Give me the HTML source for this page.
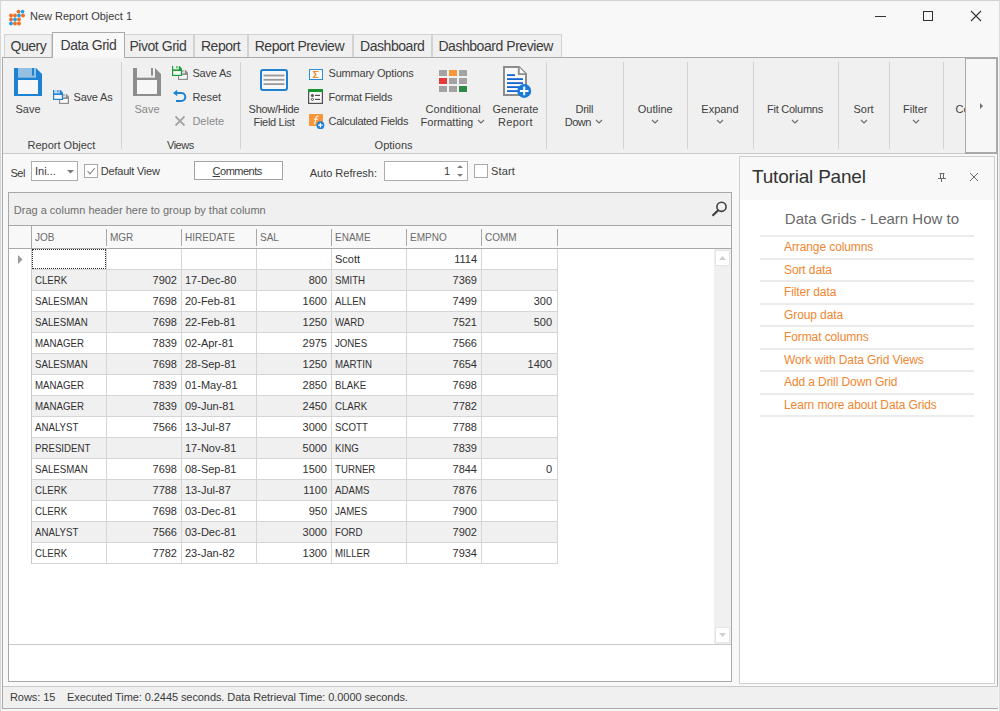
<!DOCTYPE html>
<html><head><meta charset="utf-8">
<style>
*{box-sizing:border-box;margin:0;padding:0}
html,body{width:1000px;height:711px;overflow:hidden;background:#f8f8f8;font-family:"Liberation Sans",sans-serif;color:#3b3b3b}
body{position:relative}
.a{position:absolute}
.t{position:absolute;white-space:nowrap;line-height:1}
svg{position:absolute;overflow:visible}
</style></head><body>
<div class="a" style="left:0px;top:0px;width:1000px;height:1px;background:#d2d2d2;"></div>
<div class="a" style="left:0px;top:0px;width:1px;height:711px;background:#d6d6d6;"></div>
<div class="a" style="left:999px;top:0px;width:1px;height:711px;background:#dcdcdc;"></div>
<svg style="left:8px;top:8.5px" width="18" height="18" viewBox="0 0 18 18">
<g fill="#f56d1f"><circle cx="10.5" cy="2.6" r="1.9"/><circle cx="3" cy="6.5" r="1.9"/><circle cx="7" cy="6.5" r="1.9"/><circle cx="15" cy="6.5" r="1.9"/><circle cx="3" cy="10.5" r="1.9"/><circle cx="11" cy="10.5" r="1.9"/><circle cx="7" cy="14.5" r="1.9"/><circle cx="11" cy="14.5" r="1.9"/></g>
<g fill="#1aa3f0"><circle cx="14.5" cy="2.6" r="1.9"/><circle cx="11" cy="6.5" r="1.9"/><circle cx="7" cy="10.5" r="1.9"/><circle cx="3" cy="14.5" r="1.9"/></g>
</svg>
<div class="t" style="left:30px;top:11px;font-size:11px;color:#3b3b3b;">New Report Object 1</div>
<div class="a" style="left:875px;top:16px;width:11px;height:1px;background:#333;"></div>
<div class="a" style="left:923px;top:11px;width:10px;height:10px;border:1px solid #333"></div>
<svg style="left:971px;top:11px" width="10" height="10" viewBox="0 0 10 10"><path d="M0 0L10 10M10 0L0 10" stroke="#333" stroke-width="1.1"/></svg>
<div class="a" style="left:4px;top:34px;width:48px;height:24px;background:#f0f0f0;border:1px solid #d2d2d2;border-bottom:none"></div>
<div class="t" style="left:10.5px;top:39px;font-size:14px;color:#3b3b3b;letter-spacing:-0.45px;">Query</div>
<div class="a" style="left:124px;top:34px;width:70px;height:24px;background:#f0f0f0;border:1px solid #d2d2d2;border-bottom:none"></div>
<div class="t" style="left:129.4px;top:39px;font-size:14px;color:#3b3b3b;letter-spacing:-0.45px;">Pivot Grid</div>
<div class="a" style="left:194px;top:34px;width:54px;height:24px;background:#f0f0f0;border:1px solid #d2d2d2;border-bottom:none"></div>
<div class="t" style="left:200.9px;top:39px;font-size:14px;color:#3b3b3b;letter-spacing:-0.45px;">Report</div>
<div class="a" style="left:248px;top:34px;width:105px;height:24px;background:#f0f0f0;border:1px solid #d2d2d2;border-bottom:none"></div>
<div class="t" style="left:254.7px;top:39px;font-size:14px;color:#3b3b3b;letter-spacing:-0.45px;">Report Preview</div>
<div class="a" style="left:353px;top:34px;width:79px;height:24px;background:#f0f0f0;border:1px solid #d2d2d2;border-bottom:none"></div>
<div class="t" style="left:360px;top:39px;font-size:14px;color:#3b3b3b;letter-spacing:-0.45px;">Dashboard</div>
<div class="a" style="left:432px;top:34px;width:130px;height:24px;background:#f0f0f0;border:1px solid #d2d2d2;border-bottom:none"></div>
<div class="t" style="left:438.4px;top:39px;font-size:14px;color:#3b3b3b;letter-spacing:-0.45px;">Dashboard Preview</div>
<div class="a" style="left:2px;top:57px;width:996px;height:97px;background:#f0f0f0;border:1px solid #ababab;border-bottom-color:#c9c9c9"></div>
<div class="a" style="left:52px;top:32px;width:73px;height:26px;background:#f8f8f8;border:1px solid #ababab;border-bottom:none"></div>
<div class="t" style="left:60.5px;top:38px;font-size:14px;color:#3b3b3b;letter-spacing:-0.45px;">Data Grid</div>
<div class="a" style="left:121px;top:62px;width:1px;height:87px;background:#d3d3d3;"></div>
<div class="a" style="left:240px;top:62px;width:1px;height:87px;background:#d3d3d3;"></div>
<div class="a" style="left:546px;top:62px;width:1px;height:87px;background:#d3d3d3;"></div>
<div class="a" style="left:623px;top:62px;width:1px;height:87px;background:#d3d3d3;"></div>
<div class="a" style="left:687px;top:62px;width:1px;height:87px;background:#d3d3d3;"></div>
<div class="a" style="left:753px;top:62px;width:1px;height:87px;background:#d3d3d3;"></div>
<div class="a" style="left:838px;top:62px;width:1px;height:87px;background:#d3d3d3;"></div>
<div class="a" style="left:889px;top:62px;width:1px;height:87px;background:#d3d3d3;"></div>
<div class="a" style="left:943px;top:62px;width:1px;height:87px;background:#d3d3d3;"></div>
<svg style="left:14px;top:68px" width="28" height="28" viewBox="0 0 28 28">
<path d="M0 0H22L28 6V28H0Z" fill="#1d82d3"/><rect x="4" y="0" width="18" height="9.7" fill="#93bfe2"/><rect x="18" y="0" width="2" height="7.6" fill="#1d82d3"/><rect x="4" y="12" width="20" height="14" fill="#f7f7f7"/></svg>
<div class="t" style="left:15.5px;top:104px;font-size:11px;color:#3f3f3f;">Save</div>
<svg style="left:59px;top:94px" width="10" height="10" viewBox="0 0 10 10">
<path d="M0 0H7.5L10 2.5V10H0Z" fill="#8e8e8e"/><rect x="1.2" y="0" width="5.6" height="3.4" fill="#f0f0f0"/><rect x="4.4" y="0" width="1.1" height="2.4" fill="#8e8e8e"/><rect x="1.2" y="5" width="7.6" height="3.8" fill="#fafafa"/></svg>
<svg style="left:53px;top:90px" width="10" height="10" viewBox="0 0 10 10">
<path d="M0 0H7.5L10 2.5V10H0Z" fill="#1d82d3"/><rect x="1.2" y="0" width="5.6" height="3.4" fill="#c5dcf0"/><rect x="4.4" y="0" width="1.1" height="2.4" fill="#1d82d3"/><rect x="1.2" y="5" width="7.6" height="3.8" fill="#fafafa"/></svg>
<div class="t" style="left:73.5px;top:92px;font-size:11px;color:#3f3f3f;letter-spacing:-0.2px;">Save As</div>
<div class="t" style="left:27.5px;top:140px;font-size:11px;color:#3f3f3f;">Report Object</div>
<svg style="left:133px;top:68px" width="28" height="28" viewBox="0 0 28 28">
<path d="M0 0H22L28 6V28H0Z" fill="#8e8e8e"/><rect x="4" y="0" width="18" height="9.7" fill="#f0f0f0"/><rect x="18" y="0" width="2" height="7.6" fill="#8e8e8e"/><rect x="4" y="12" width="20" height="14" fill="#f7f7f7"/></svg>
<div class="t" style="left:134.5px;top:104px;font-size:11px;color:#8a8a8a;">Save</div>
<svg style="left:178px;top:70px" width="10" height="10" viewBox="0 0 10 10">
<path d="M0 0H7.5L10 2.5V10H0Z" fill="#8e8e8e"/><rect x="1.2" y="0" width="5.6" height="3.4" fill="#f0f0f0"/><rect x="4.4" y="0" width="1.1" height="2.4" fill="#8e8e8e"/><rect x="1.2" y="5" width="7.6" height="3.8" fill="#fafafa"/></svg>
<svg style="left:172px;top:66px" width="10" height="10" viewBox="0 0 10 10">
<path d="M0 0H7.5L10 2.5V10H0Z" fill="#1e9e3a"/><rect x="1.2" y="0" width="5.6" height="3.4" fill="#f2f2f2"/><rect x="4.4" y="0" width="1.1" height="2.4" fill="#1e9e3a"/><rect x="1.2" y="5" width="7.6" height="3.8" fill="#fafafa"/></svg>
<div class="t" style="left:192.4px;top:68px;font-size:11px;color:#3f3f3f;letter-spacing:-0.2px;">Save As</div>
<svg style="left:172px;top:90px" width="15" height="13" viewBox="0 0 15 13"><path d="M4.5 3H9.3A4 4 0 0 1 9.3 11H4" fill="none" stroke="#1d82d3" stroke-width="2"/><path d="M1 3L5.2 -0.2V6.2Z" fill="#1d82d3"/></svg>
<div class="t" style="left:192.4px;top:92px;font-size:11px;color:#3f3f3f;">Reset</div>
<svg style="left:175px;top:116px" width="10" height="10" viewBox="0 0 10 10"><path d="M0.5 0.5L9.5 9.5M9.5 0.5L0.5 9.5" stroke="#a6a6a6" stroke-width="1.8"/></svg>
<div class="t" style="left:192.4px;top:116px;font-size:11px;color:#8a8a8a;">Delete</div>
<div class="t" style="left:167px;top:140px;font-size:11px;color:#3f3f3f;letter-spacing:-0.5px;">Views</div>
<svg style="left:260px;top:69px" width="28" height="22" viewBox="0 0 28 22">
<rect x="1" y="1" width="26" height="20" rx="2" fill="#f7f7f7" stroke="#1d82d3" stroke-width="2"/>
<rect x="3.5" y="5.6" width="21" height="1.8" fill="#9a9a9a"/><rect x="3.5" y="9.9" width="21" height="1.8" fill="#9a9a9a"/><rect x="3.5" y="14.2" width="21" height="1.8" fill="#9a9a9a"/></svg>
<div class="t" style="left:248.6px;top:104px;font-size:11px;color:#3f3f3f;letter-spacing:-0.3px;">Show/Hide</div>
<div class="t" style="left:253.5px;top:117px;font-size:11px;color:#3f3f3f;letter-spacing:-0.3px;">Field List</div>
<svg style="left:309px;top:69px" width="14" height="11" viewBox="0 0 14 11">
<rect x="0.5" y="0.5" width="13" height="10" fill="#fafafa" stroke="#2b8bd8" stroke-width="1"/>
<path d="M9.5 2.5H4.5L7 5.5L4.5 8.5H9.5" fill="none" stroke="#f08a24" stroke-width="1.2"/></svg>
<div class="t" style="left:328.5px;top:68px;font-size:11px;color:#3f3f3f;letter-spacing:-0.2px;">Summary Options</div>
<svg style="left:308px;top:89px" width="15" height="15" viewBox="0 0 15 15">
<rect x="0.6" y="0.6" width="13.8" height="13.8" fill="#f7f7f7" stroke="#505050" stroke-width="1.2"/>
<rect x="0" y="0" width="15" height="3" fill="#14952e"/>
<circle cx="4.4" cy="6.4" r="1.5" fill="#505050"/><circle cx="4.4" cy="10.4" r="1.1" fill="none" stroke="#505050" stroke-width="1"/>
<rect x="7" y="5.8" width="5" height="1.2" fill="#505050"/><rect x="7" y="9.8" width="5" height="1.2" fill="#505050"/></svg>
<div class="t" style="left:328.5px;top:92px;font-size:11px;color:#3f3f3f;letter-spacing:-0.28px;">Format Fields</div>
<svg style="left:309px;top:114px" width="16" height="16" viewBox="0 0 16 16">
<rect x="0" y="0" width="14" height="12" fill="#f7963b"/>
<path d="M9.5 2.2C8 1.8 7.3 2.6 7 4L5.6 10.5M5 5.2H8.8" fill="none" stroke="#fff" stroke-width="1.1"/>
<circle cx="11.4" cy="11.2" r="3.9" fill="#1d7fd6"/>
<path d="M11.4 8.9V13.5M9.1 11.2H13.7" stroke="#fff" stroke-width="1.2"/></svg>
<div class="t" style="left:328.5px;top:116px;font-size:11px;color:#3f3f3f;letter-spacing:-0.28px;">Calculated Fields</div>
<div class="t" style="left:374.6px;top:140px;font-size:11px;color:#3f3f3f;">Options</div>
<div class="a" style="left:439px;top:70px;width:8px;height:6px;background:#a3a3a3;"></div>
<div class="a" style="left:449px;top:70px;width:8px;height:6px;background:#f9963a;"></div>
<div class="a" style="left:459px;top:70px;width:8px;height:6px;background:#a3a3a3;"></div>
<div class="a" style="left:439px;top:78px;width:8px;height:6px;background:#e63a3a;"></div>
<div class="a" style="left:449px;top:78px;width:8px;height:6px;background:#a3a3a3;"></div>
<div class="a" style="left:459px;top:78px;width:8px;height:6px;background:#a3a3a3;"></div>
<div class="a" style="left:439px;top:86px;width:8px;height:6px;background:#a3a3a3;"></div>
<div class="a" style="left:449px;top:86px;width:8px;height:6px;background:#a3a3a3;"></div>
<div class="a" style="left:459px;top:86px;width:8px;height:6px;background:#2e8b47;"></div>
<div class="t" style="left:425.6px;top:104px;font-size:11px;color:#3f3f3f;">Conditional</div>
<div class="t" style="left:420.6px;top:117px;font-size:11px;color:#3f3f3f;">Formatting</div>
<svg class="a" style="left:476.5px;top:119px" width="8" height="5" viewBox="0 0 8 5"><path d="M1 1L4 4L7 1" fill="none" stroke="#6f6f6f" stroke-width="1.2"/></svg>
<svg style="left:503px;top:66px" width="30" height="33" viewBox="0 0 30 33">
<path d="M1 1H16L23 8V29H1Z" fill="#f8f8f8" stroke="#8c8c8c" stroke-width="2"/>
<path d="M15.8 1V8.2H23" fill="#f8f8f8" stroke="#8c8c8c" stroke-width="1.8"/>
<rect x="4" y="8.2" width="8" height="1.8" fill="#1565d0"/>
<rect x="4" y="12.2" width="16" height="1.8" fill="#1565d0"/><rect x="4" y="16.2" width="16" height="1.8" fill="#1565d0"/><rect x="4" y="20.2" width="16" height="1.8" fill="#1565d0"/><rect x="4" y="24.2" width="16" height="1.8" fill="#1565d0"/>
<circle cx="21.2" cy="24.9" r="7" fill="#1a7ad8"/>
<path d="M21.2 20.6V29.2M16.9 24.9H25.5" stroke="#fff" stroke-width="2"/></svg>
<div class="t" style="left:492.5px;top:104px;font-size:11px;color:#3f3f3f;">Generate</div>
<div class="t" style="left:498px;top:117px;font-size:11px;color:#3f3f3f;letter-spacing:0.3px;">Report</div>
<div class="t" style="left:575.6px;top:104px;font-size:11px;color:#3f3f3f;letter-spacing:-0.3px;">Drill</div>
<div class="t" style="left:564.8px;top:117px;font-size:11px;color:#3f3f3f;letter-spacing:-0.5px;">Down</div>
<svg class="a" style="left:595px;top:119px" width="8" height="5" viewBox="0 0 8 5"><path d="M1 1L4 4L7 1" fill="none" stroke="#6f6f6f" stroke-width="1.2"/></svg>
<div class="t" style="left:637.8px;top:104px;font-size:11px;color:#3f3f3f;">Outline</div>
<svg class="a" style="left:651px;top:119px" width="8" height="5" viewBox="0 0 8 5"><path d="M1 1L4 4L7 1" fill="none" stroke="#6f6f6f" stroke-width="1.2"/></svg>
<div class="t" style="left:701.3px;top:104px;font-size:11px;color:#3f3f3f;">Expand</div>
<svg class="a" style="left:715.5px;top:119px" width="8" height="5" viewBox="0 0 8 5"><path d="M1 1L4 4L7 1" fill="none" stroke="#6f6f6f" stroke-width="1.2"/></svg>
<div class="t" style="left:767px;top:104px;font-size:11px;color:#3f3f3f;letter-spacing:-0.25px;">Fit Columns</div>
<svg class="a" style="left:791px;top:119px" width="8" height="5" viewBox="0 0 8 5"><path d="M1 1L4 4L7 1" fill="none" stroke="#6f6f6f" stroke-width="1.2"/></svg>
<div class="t" style="left:853.5px;top:104px;font-size:11px;color:#3f3f3f;">Sort</div>
<svg class="a" style="left:860px;top:119px" width="8" height="5" viewBox="0 0 8 5"><path d="M1 1L4 4L7 1" fill="none" stroke="#6f6f6f" stroke-width="1.2"/></svg>
<div class="t" style="left:903px;top:104px;font-size:11px;color:#3f3f3f;">Filter</div>
<svg class="a" style="left:911.5px;top:119px" width="8" height="5" viewBox="0 0 8 5"><path d="M1 1L4 4L7 1" fill="none" stroke="#6f6f6f" stroke-width="1.2"/></svg>
<div class="a" style="left:944px;top:58px;width:21px;height:90px;overflow:hidden">
<div class="t" style="left:11.5px;top:46px;font-size:11px;color:#3f3f3f">Co</div>
</div>
<div class="a" style="left:965px;top:57px;width:33px;height:97px;background:#f7f7f7;border:1px solid #a9a9a9;border-width:2px 2px 2px 1px"></div>
<svg style="left:980px;top:103px" width="4" height="6" viewBox="0 0 4 6"><path d="M0 0L3 3L0 6Z" fill="#6f6f6f"/></svg>
<div class="a" style="left:2px;top:153px;width:1px;height:556px;background:#ababab;"></div>
<div class="a" style="left:997px;top:153px;width:1px;height:556px;background:#ababab;"></div>
<div class="t" style="left:10.4px;top:168px;font-size:11px;color:#3b3b3b;letter-spacing:-0.4px;">Sel</div>
<div class="a" style="left:31px;top:161px;width:47px;height:20px;background:#fff;border:1px solid #adadad"></div>
<div class="t" style="left:35px;top:166px;font-size:11px;color:#3b3b3b;">Ini...</div>
<svg style="left:67px;top:170px" width="7" height="4" viewBox="0 0 7 4"><path d="M0 0H7L3.5 3.5Z" fill="#7a7a7a"/></svg>
<div class="a" style="left:84px;top:164px;width:14px;height:14px;background:#fff;border:1px solid #a9a9a9"></div>
<svg style="left:86px;top:166px" width="10" height="10" viewBox="0 0 10 10"><path d="M1.5 5.2L4 7.8L8.8 2" fill="none" stroke="#8a8a8a" stroke-width="1.1"/></svg>
<div class="t" style="left:100.8px;top:166px;font-size:11px;color:#3b3b3b;letter-spacing:-0.22px;">Default View</div>
<div class="a" style="left:194px;top:161px;width:89px;height:19px;background:#fff;border:1px solid #a3a3a3"></div>
<div class="t" style="left:212.6px;top:166px;font-size:11px;color:#3b3b3b;letter-spacing:-0.5px;"><u style="text-underline-offset:1px">C</u>omments</div>
<div class="t" style="left:309.7px;top:168px;font-size:11px;color:#3b3b3b;">Auto Refresh:</div>
<div class="a" style="left:384px;top:161px;width:84px;height:20px;background:#fff;border:1px solid #adadad"></div>
<div class="t" style="left:444px;top:166px;font-size:11px;color:#3b3b3b;">1</div>
<svg style="left:457px;top:165px" width="6" height="12" viewBox="0 0 6 12"><path d="M0 3L3 0.3L6 3Z M0 9L3 11.7L6 9Z" fill="#7a7a7a"/></svg>
<div class="a" style="left:474px;top:164px;width:14px;height:14px;background:#fff;border:1px solid #a9a9a9"></div>
<div class="t" style="left:490.9px;top:166px;font-size:11px;color:#3b3b3b;letter-spacing:0.2px;">Start</div>
<div class="a" style="left:8px;top:192px;width:724px;height:490px;background:#fff;border:1px solid #a8a8a8"></div>
<div class="a" style="left:9px;top:193px;width:722px;height:32px;background:#f0f0f0;"></div>
<div class="a" style="left:9px;top:225px;width:722px;height:1px;background:#a8a8a8;"></div>
<div class="t" style="left:13.8px;top:205px;font-size:11px;color:#6e6e6e;">Drag a column header here to group by that column</div>
<svg style="left:711px;top:201px" width="17" height="16" viewBox="0 0 17 16"><circle cx="10.5" cy="5.8" r="4.6" fill="none" stroke="#404040" stroke-width="1.6"/><path d="M7.2 9.2L1.5 14.8" stroke="#404040" stroke-width="2.2"/></svg>
<div class="a" style="left:9px;top:226px;width:722px;height:22px;background:#f8f8f8;"></div>
<div class="a" style="left:9px;top:248px;width:722px;height:1px;background:#a8a8a8;"></div>
<div class="a" style="left:31px;top:226px;width:1px;height:22px;background:#a8a8a8;"></div>
<div class="t" style="left:35px;top:232px;font-size:11px;color:#6b6b6b;transform:scaleX(0.91);transform-origin:0 0">JOB</div>
<div class="a" style="left:106px;top:229px;width:1px;height:17px;background:#a8a8a8;"></div>
<div class="t" style="left:110px;top:232px;font-size:11px;color:#6b6b6b;transform:scaleX(0.91);transform-origin:0 0">MGR</div>
<div class="a" style="left:181px;top:229px;width:1px;height:17px;background:#a8a8a8;"></div>
<div class="t" style="left:185px;top:232px;font-size:11px;color:#6b6b6b;transform:scaleX(0.91);transform-origin:0 0">HIREDATE</div>
<div class="a" style="left:256px;top:229px;width:1px;height:17px;background:#a8a8a8;"></div>
<div class="t" style="left:260px;top:232px;font-size:11px;color:#6b6b6b;transform:scaleX(0.91);transform-origin:0 0">SAL</div>
<div class="a" style="left:331px;top:229px;width:1px;height:17px;background:#a8a8a8;"></div>
<div class="t" style="left:335px;top:232px;font-size:11px;color:#6b6b6b;transform:scaleX(0.91);transform-origin:0 0">ENAME</div>
<div class="a" style="left:406px;top:229px;width:1px;height:17px;background:#a8a8a8;"></div>
<div class="t" style="left:410px;top:232px;font-size:11px;color:#6b6b6b;transform:scaleX(0.91);transform-origin:0 0">EMPNO</div>
<div class="a" style="left:481px;top:229px;width:1px;height:17px;background:#a8a8a8;"></div>
<div class="t" style="left:485px;top:232px;font-size:11px;color:#6b6b6b;transform:scaleX(0.91);transform-origin:0 0">COMM</div>
<div class="a" style="left:557px;top:229px;width:1px;height:17px;background:#a8a8a8;"></div>
<div class="a" style="left:31px;top:269px;width:527px;height:1px;background:#d5d5d5;"></div>
<div class="t" style="left:335px;top:254px;font-size:11px;color:#303030;">Scott</div>
<div class="t" style="left:406px;width:71px;text-align:right;top:254px;font-size:11px;color:#303030">1114</div>
<div class="a" style="left:32px;top:270px;width:525px;height:20px;background:#f0f0f0;"></div>
<div class="a" style="left:31px;top:290px;width:527px;height:1px;background:#d5d5d5;"></div>
<div class="t" style="left:35px;top:275px;font-size:11px;color:#303030;transform:scaleX(0.88);transform-origin:0 0">CLERK</div>
<div class="t" style="left:106px;width:71px;text-align:right;top:275px;font-size:11px;color:#303030">7902</div>
<div class="t" style="left:185px;top:275px;font-size:11px;color:#303030;">17-Dec-80</div>
<div class="t" style="left:256px;width:71px;text-align:right;top:275px;font-size:11px;color:#303030">800</div>
<div class="t" style="left:335px;top:275px;font-size:11px;color:#303030;transform:scaleX(0.88);transform-origin:0 0">SMITH</div>
<div class="t" style="left:406px;width:71px;text-align:right;top:275px;font-size:11px;color:#303030">7369</div>
<div class="a" style="left:31px;top:311px;width:527px;height:1px;background:#d5d5d5;"></div>
<div class="t" style="left:35px;top:296px;font-size:11px;color:#303030;transform:scaleX(0.88);transform-origin:0 0">SALESMAN</div>
<div class="t" style="left:106px;width:71px;text-align:right;top:296px;font-size:11px;color:#303030">7698</div>
<div class="t" style="left:185px;top:296px;font-size:11px;color:#303030;">20-Feb-81</div>
<div class="t" style="left:256px;width:71px;text-align:right;top:296px;font-size:11px;color:#303030">1600</div>
<div class="t" style="left:335px;top:296px;font-size:11px;color:#303030;transform:scaleX(0.88);transform-origin:0 0">ALLEN</div>
<div class="t" style="left:406px;width:71px;text-align:right;top:296px;font-size:11px;color:#303030">7499</div>
<div class="t" style="left:481px;width:71px;text-align:right;top:296px;font-size:11px;color:#303030">300</div>
<div class="a" style="left:32px;top:312px;width:525px;height:20px;background:#f0f0f0;"></div>
<div class="a" style="left:31px;top:332px;width:527px;height:1px;background:#d5d5d5;"></div>
<div class="t" style="left:35px;top:317px;font-size:11px;color:#303030;transform:scaleX(0.88);transform-origin:0 0">SALESMAN</div>
<div class="t" style="left:106px;width:71px;text-align:right;top:317px;font-size:11px;color:#303030">7698</div>
<div class="t" style="left:185px;top:317px;font-size:11px;color:#303030;">22-Feb-81</div>
<div class="t" style="left:256px;width:71px;text-align:right;top:317px;font-size:11px;color:#303030">1250</div>
<div class="t" style="left:335px;top:317px;font-size:11px;color:#303030;transform:scaleX(0.88);transform-origin:0 0">WARD</div>
<div class="t" style="left:406px;width:71px;text-align:right;top:317px;font-size:11px;color:#303030">7521</div>
<div class="t" style="left:481px;width:71px;text-align:right;top:317px;font-size:11px;color:#303030">500</div>
<div class="a" style="left:31px;top:353px;width:527px;height:1px;background:#d5d5d5;"></div>
<div class="t" style="left:35px;top:338px;font-size:11px;color:#303030;transform:scaleX(0.88);transform-origin:0 0">MANAGER</div>
<div class="t" style="left:106px;width:71px;text-align:right;top:338px;font-size:11px;color:#303030">7839</div>
<div class="t" style="left:185px;top:338px;font-size:11px;color:#303030;">02-Apr-81</div>
<div class="t" style="left:256px;width:71px;text-align:right;top:338px;font-size:11px;color:#303030">2975</div>
<div class="t" style="left:335px;top:338px;font-size:11px;color:#303030;transform:scaleX(0.88);transform-origin:0 0">JONES</div>
<div class="t" style="left:406px;width:71px;text-align:right;top:338px;font-size:11px;color:#303030">7566</div>
<div class="a" style="left:32px;top:354px;width:525px;height:20px;background:#f0f0f0;"></div>
<div class="a" style="left:31px;top:374px;width:527px;height:1px;background:#d5d5d5;"></div>
<div class="t" style="left:35px;top:359px;font-size:11px;color:#303030;transform:scaleX(0.88);transform-origin:0 0">SALESMAN</div>
<div class="t" style="left:106px;width:71px;text-align:right;top:359px;font-size:11px;color:#303030">7698</div>
<div class="t" style="left:185px;top:359px;font-size:11px;color:#303030;">28-Sep-81</div>
<div class="t" style="left:256px;width:71px;text-align:right;top:359px;font-size:11px;color:#303030">1250</div>
<div class="t" style="left:335px;top:359px;font-size:11px;color:#303030;transform:scaleX(0.88);transform-origin:0 0">MARTIN</div>
<div class="t" style="left:406px;width:71px;text-align:right;top:359px;font-size:11px;color:#303030">7654</div>
<div class="t" style="left:481px;width:71px;text-align:right;top:359px;font-size:11px;color:#303030">1400</div>
<div class="a" style="left:31px;top:395px;width:527px;height:1px;background:#d5d5d5;"></div>
<div class="t" style="left:35px;top:380px;font-size:11px;color:#303030;transform:scaleX(0.88);transform-origin:0 0">MANAGER</div>
<div class="t" style="left:106px;width:71px;text-align:right;top:380px;font-size:11px;color:#303030">7839</div>
<div class="t" style="left:185px;top:380px;font-size:11px;color:#303030;">01-May-81</div>
<div class="t" style="left:256px;width:71px;text-align:right;top:380px;font-size:11px;color:#303030">2850</div>
<div class="t" style="left:335px;top:380px;font-size:11px;color:#303030;transform:scaleX(0.88);transform-origin:0 0">BLAKE</div>
<div class="t" style="left:406px;width:71px;text-align:right;top:380px;font-size:11px;color:#303030">7698</div>
<div class="a" style="left:32px;top:396px;width:525px;height:20px;background:#f0f0f0;"></div>
<div class="a" style="left:31px;top:416px;width:527px;height:1px;background:#d5d5d5;"></div>
<div class="t" style="left:35px;top:401px;font-size:11px;color:#303030;transform:scaleX(0.88);transform-origin:0 0">MANAGER</div>
<div class="t" style="left:106px;width:71px;text-align:right;top:401px;font-size:11px;color:#303030">7839</div>
<div class="t" style="left:185px;top:401px;font-size:11px;color:#303030;">09-Jun-81</div>
<div class="t" style="left:256px;width:71px;text-align:right;top:401px;font-size:11px;color:#303030">2450</div>
<div class="t" style="left:335px;top:401px;font-size:11px;color:#303030;transform:scaleX(0.88);transform-origin:0 0">CLARK</div>
<div class="t" style="left:406px;width:71px;text-align:right;top:401px;font-size:11px;color:#303030">7782</div>
<div class="a" style="left:31px;top:437px;width:527px;height:1px;background:#d5d5d5;"></div>
<div class="t" style="left:35px;top:422px;font-size:11px;color:#303030;transform:scaleX(0.88);transform-origin:0 0">ANALYST</div>
<div class="t" style="left:106px;width:71px;text-align:right;top:422px;font-size:11px;color:#303030">7566</div>
<div class="t" style="left:185px;top:422px;font-size:11px;color:#303030;">13-Jul-87</div>
<div class="t" style="left:256px;width:71px;text-align:right;top:422px;font-size:11px;color:#303030">3000</div>
<div class="t" style="left:335px;top:422px;font-size:11px;color:#303030;transform:scaleX(0.88);transform-origin:0 0">SCOTT</div>
<div class="t" style="left:406px;width:71px;text-align:right;top:422px;font-size:11px;color:#303030">7788</div>
<div class="a" style="left:32px;top:438px;width:525px;height:20px;background:#f0f0f0;"></div>
<div class="a" style="left:31px;top:458px;width:527px;height:1px;background:#d5d5d5;"></div>
<div class="t" style="left:35px;top:443px;font-size:11px;color:#303030;transform:scaleX(0.88);transform-origin:0 0">PRESIDENT</div>
<div class="t" style="left:185px;top:443px;font-size:11px;color:#303030;">17-Nov-81</div>
<div class="t" style="left:256px;width:71px;text-align:right;top:443px;font-size:11px;color:#303030">5000</div>
<div class="t" style="left:335px;top:443px;font-size:11px;color:#303030;transform:scaleX(0.88);transform-origin:0 0">KING</div>
<div class="t" style="left:406px;width:71px;text-align:right;top:443px;font-size:11px;color:#303030">7839</div>
<div class="a" style="left:31px;top:479px;width:527px;height:1px;background:#d5d5d5;"></div>
<div class="t" style="left:35px;top:464px;font-size:11px;color:#303030;transform:scaleX(0.88);transform-origin:0 0">SALESMAN</div>
<div class="t" style="left:106px;width:71px;text-align:right;top:464px;font-size:11px;color:#303030">7698</div>
<div class="t" style="left:185px;top:464px;font-size:11px;color:#303030;">08-Sep-81</div>
<div class="t" style="left:256px;width:71px;text-align:right;top:464px;font-size:11px;color:#303030">1500</div>
<div class="t" style="left:335px;top:464px;font-size:11px;color:#303030;transform:scaleX(0.88);transform-origin:0 0">TURNER</div>
<div class="t" style="left:406px;width:71px;text-align:right;top:464px;font-size:11px;color:#303030">7844</div>
<div class="t" style="left:481px;width:71px;text-align:right;top:464px;font-size:11px;color:#303030">0</div>
<div class="a" style="left:32px;top:480px;width:525px;height:20px;background:#f0f0f0;"></div>
<div class="a" style="left:31px;top:500px;width:527px;height:1px;background:#d5d5d5;"></div>
<div class="t" style="left:35px;top:485px;font-size:11px;color:#303030;transform:scaleX(0.88);transform-origin:0 0">CLERK</div>
<div class="t" style="left:106px;width:71px;text-align:right;top:485px;font-size:11px;color:#303030">7788</div>
<div class="t" style="left:185px;top:485px;font-size:11px;color:#303030;">13-Jul-87</div>
<div class="t" style="left:256px;width:71px;text-align:right;top:485px;font-size:11px;color:#303030">1100</div>
<div class="t" style="left:335px;top:485px;font-size:11px;color:#303030;transform:scaleX(0.88);transform-origin:0 0">ADAMS</div>
<div class="t" style="left:406px;width:71px;text-align:right;top:485px;font-size:11px;color:#303030">7876</div>
<div class="a" style="left:31px;top:521px;width:527px;height:1px;background:#d5d5d5;"></div>
<div class="t" style="left:35px;top:506px;font-size:11px;color:#303030;transform:scaleX(0.88);transform-origin:0 0">CLERK</div>
<div class="t" style="left:106px;width:71px;text-align:right;top:506px;font-size:11px;color:#303030">7698</div>
<div class="t" style="left:185px;top:506px;font-size:11px;color:#303030;">03-Dec-81</div>
<div class="t" style="left:256px;width:71px;text-align:right;top:506px;font-size:11px;color:#303030">950</div>
<div class="t" style="left:335px;top:506px;font-size:11px;color:#303030;transform:scaleX(0.88);transform-origin:0 0">JAMES</div>
<div class="t" style="left:406px;width:71px;text-align:right;top:506px;font-size:11px;color:#303030">7900</div>
<div class="a" style="left:32px;top:522px;width:525px;height:20px;background:#f0f0f0;"></div>
<div class="a" style="left:31px;top:542px;width:527px;height:1px;background:#d5d5d5;"></div>
<div class="t" style="left:35px;top:527px;font-size:11px;color:#303030;transform:scaleX(0.88);transform-origin:0 0">ANALYST</div>
<div class="t" style="left:106px;width:71px;text-align:right;top:527px;font-size:11px;color:#303030">7566</div>
<div class="t" style="left:185px;top:527px;font-size:11px;color:#303030;">03-Dec-81</div>
<div class="t" style="left:256px;width:71px;text-align:right;top:527px;font-size:11px;color:#303030">3000</div>
<div class="t" style="left:335px;top:527px;font-size:11px;color:#303030;transform:scaleX(0.88);transform-origin:0 0">FORD</div>
<div class="t" style="left:406px;width:71px;text-align:right;top:527px;font-size:11px;color:#303030">7902</div>
<div class="a" style="left:31px;top:563px;width:527px;height:1px;background:#d5d5d5;"></div>
<div class="t" style="left:35px;top:548px;font-size:11px;color:#303030;transform:scaleX(0.88);transform-origin:0 0">CLERK</div>
<div class="t" style="left:106px;width:71px;text-align:right;top:548px;font-size:11px;color:#303030">7782</div>
<div class="t" style="left:185px;top:548px;font-size:11px;color:#303030;">23-Jan-82</div>
<div class="t" style="left:256px;width:71px;text-align:right;top:548px;font-size:11px;color:#303030">1300</div>
<div class="t" style="left:335px;top:548px;font-size:11px;color:#303030;transform:scaleX(0.88);transform-origin:0 0">MILLER</div>
<div class="t" style="left:406px;width:71px;text-align:right;top:548px;font-size:11px;color:#303030">7934</div>
<div class="a" style="left:31px;top:249px;width:1px;height:315px;background:#d5d5d5;"></div>
<div class="a" style="left:106px;top:249px;width:1px;height:315px;background:#d5d5d5;"></div>
<div class="a" style="left:181px;top:249px;width:1px;height:315px;background:#d5d5d5;"></div>
<div class="a" style="left:256px;top:249px;width:1px;height:315px;background:#d5d5d5;"></div>
<div class="a" style="left:331px;top:249px;width:1px;height:315px;background:#d5d5d5;"></div>
<div class="a" style="left:406px;top:249px;width:1px;height:315px;background:#d5d5d5;"></div>
<div class="a" style="left:481px;top:249px;width:1px;height:315px;background:#d5d5d5;"></div>
<div class="a" style="left:557px;top:249px;width:1px;height:315px;background:#d5d5d5;"></div>
<div class="a" style="left:31px;top:249px;width:1px;height:315px;background:#c8c8c8;"></div>
<div class="a" style="left:32px;top:249px;width:74px;height:20px;border:1px dotted #303030"></div>
<svg style="left:18px;top:255px" width="5" height="9" viewBox="0 0 5 9"><path d="M0 0L4.5 4.5L0 9Z" fill="#9a9a9a"/></svg>
<div class="a" style="left:714px;top:249px;width:17px;height:395px;background:#f0f0f0;"></div>
<div class="a" style="left:715px;top:250px;width:15px;height:16px;background:#fff;border:1px solid #e4e4e4"></div>
<svg style="left:719px;top:256px" width="7" height="4" viewBox="0 0 7 4"><path d="M0 4H7L3.5 0Z" fill="#cfcfcf"/></svg>
<div class="a" style="left:715px;top:627px;width:15px;height:16px;background:#fff;border:1px solid #e4e4e4"></div>
<svg style="left:719px;top:633px" width="7" height="4" viewBox="0 0 7 4"><path d="M0 0H7L3.5 4Z" fill="#cfcfcf"/></svg>
<div class="a" style="left:9px;top:644px;width:722px;height:1px;background:#c8c8c8;"></div>
<div class="a" style="left:739px;top:156px;width:256px;height:528px;background:#fff;border:1px solid #cfcfcf"></div>
<div class="a" style="left:740px;top:157px;width:254px;height:43px;background:#f8f8f8;"></div>
<div class="t" style="left:752px;top:167px;font-size:19px;color:#333;letter-spacing:-0.2px;">Tutorial Panel</div>
<svg style="left:938px;top:173px" width="8" height="9" viewBox="0 0 8 9"><path d="M1.5 0.5H6.5M2.5 0.5V5M5.5 0.5V5M0 5.5H8M3.5 5.5V9" fill="none" stroke="#6a6a6a" stroke-width="1"/></svg>
<svg style="left:970px;top:173px" width="8" height="8" viewBox="0 0 8 8"><path d="M0 0L8 8M8 0L0 8" stroke="#6a6a6a" stroke-width="1"/></svg>
<div class="t" style="left:784.8px;top:211px;font-size:15px;color:#6a6a6a;">Data Grids - Learn How to</div>
<div class="a" style="left:760px;top:235px;width:214px;height:2px;background:#ebebeb;"></div>
<div class="a" style="left:760px;top:258px;width:214px;height:2px;background:#ebebeb;"></div>
<div class="a" style="left:760px;top:280px;width:214px;height:2px;background:#ebebeb;"></div>
<div class="a" style="left:760px;top:303px;width:214px;height:2px;background:#ebebeb;"></div>
<div class="a" style="left:760px;top:325px;width:214px;height:2px;background:#ebebeb;"></div>
<div class="a" style="left:760px;top:348px;width:214px;height:2px;background:#ebebeb;"></div>
<div class="a" style="left:760px;top:370px;width:214px;height:2px;background:#ebebeb;"></div>
<div class="a" style="left:760px;top:393px;width:214px;height:2px;background:#ebebeb;"></div>
<div class="a" style="left:760px;top:415px;width:214px;height:2px;background:#ebebeb;"></div>
<div class="t" style="left:784px;top:241px;font-size:12px;color:#f2862f;letter-spacing:-0.1px;">Arrange columns</div>
<div class="t" style="left:784px;top:264px;font-size:12px;color:#f2862f;letter-spacing:-0.1px;">Sort data</div>
<div class="t" style="left:784px;top:286px;font-size:12px;color:#f2862f;letter-spacing:-0.1px;">Filter data</div>
<div class="t" style="left:784px;top:309px;font-size:12px;color:#f2862f;letter-spacing:-0.1px;">Group data</div>
<div class="t" style="left:784px;top:331px;font-size:12px;color:#f2862f;letter-spacing:-0.1px;">Format columns</div>
<div class="t" style="left:784px;top:354px;font-size:12px;color:#f2862f;letter-spacing:-0.1px;">Work with Data Grid Views</div>
<div class="t" style="left:784px;top:376px;font-size:12px;color:#f2862f;letter-spacing:-0.1px;">Add a Drill Down Grid</div>
<div class="t" style="left:784px;top:399px;font-size:12px;color:#f2862f;letter-spacing:-0.1px;">Learn more about Data Grids</div>
<div class="a" style="left:3px;top:686px;width:995px;height:1px;background:#c8c8c8;"></div>
<div class="a" style="left:3px;top:687px;width:995px;height:21px;background:#f0f0f0;"></div>
<div class="a" style="left:3px;top:708px;width:995px;height:1px;background:#ababab;"></div>
<div class="t" style="left:10px;top:692px;font-size:11px;color:#3b3b3b;letter-spacing:-0.08px;">Rows: 15&nbsp;&nbsp;&nbsp;&nbsp;Executed Time: 0.2445 seconds. Data Retrieval Time: 0.0000 seconds.</div>
</body></html>
